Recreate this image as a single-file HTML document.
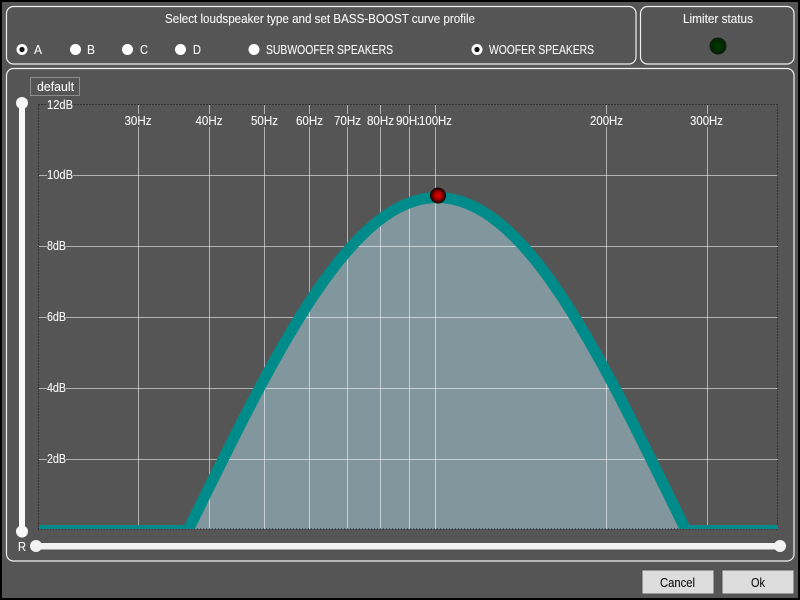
<!DOCTYPE html>
<html><head><meta charset="utf-8"><style>
html,body{margin:0;padding:0;width:800px;height:600px;overflow:hidden;background:#555}
svg{display:block}
text{font-family:"Liberation Sans",sans-serif;font-size:12.5px;fill:#f6f6f6;stroke:#f6f6f6;stroke-width:.12}
</style></head><body>
<svg width="800" height="600" viewBox="0 0 800 600" xmlns="http://www.w3.org/2000/svg">
<defs>
<radialGradient id="red" cx="50%" cy="50%" r="50%"><stop offset="0" stop-color="#e80000"/><stop offset=".45" stop-color="#b00000"/><stop offset=".85" stop-color="#300000"/><stop offset="1" stop-color="#100000"/></radialGradient>
<radialGradient id="led" cx="50%" cy="50%" r="50%"><stop offset="0" stop-color="#003c00"/><stop offset=".7" stop-color="#002800"/><stop offset="1" stop-color="#0c1c0c"/></radialGradient>
<clipPath id="plot"><rect x="39" y="105" width="739" height="424"/></clipPath>
</defs>
<rect width="800" height="600" fill="#555"/>
<rect x="1" y="1" width="798" height="598" fill="none" stroke="#000" stroke-width="2"/>

<g fill="none" stroke="#f0f0f0" stroke-width="1.2">
<rect x="6.5" y="6.5" width="629.5" height="57.5" rx="7"/>
<rect x="640.5" y="6.5" width="153.5" height="57.5" rx="7"/>
<rect x="6.5" y="68.5" width="787.5" height="492.5" rx="7"/>
</g>

<text x="165" y="23" textLength="310" lengthAdjust="spacingAndGlyphs">Select loudspeaker type and set BASS-BOOST curve profile</text>
<text x="683" y="23" textLength="70" lengthAdjust="spacingAndGlyphs">Limiter status</text>
<circle cx="718" cy="46" r="8.5" fill="url(#led)"/>

<g fill="#fff">
<circle cx="22" cy="49.5" r="5.5"/><circle cx="75.5" cy="49.5" r="5.5"/><circle cx="127.5" cy="49.5" r="5.5"/><circle cx="180.5" cy="49.5" r="5.5"/><circle cx="254" cy="49.5" r="5.5"/><circle cx="477" cy="49.5" r="5.5"/>
</g>
<circle cx="22" cy="49.5" r="2.6" fill="#111"/><circle cx="477" cy="49.5" r="2.6" fill="#111"/>
<text x="34" y="54" textLength="8" lengthAdjust="spacingAndGlyphs">A</text>
<text x="87" y="54" textLength="8" lengthAdjust="spacingAndGlyphs">B</text>
<text x="140" y="54" textLength="8" lengthAdjust="spacingAndGlyphs">C</text>
<text x="193" y="54" textLength="8" lengthAdjust="spacingAndGlyphs">D</text>
<text x="266" y="54" textLength="127" lengthAdjust="spacingAndGlyphs">SUBWOOFER SPEAKERS</text>
<text x="489" y="54" textLength="105" lengthAdjust="spacingAndGlyphs">WOOFER SPEAKERS</text>

<rect x="30.5" y="77.5" width="49" height="18" fill="#555" stroke="#8c8c8c"/>
<text x="37" y="91" textLength="37" lengthAdjust="spacingAndGlyphs">default</text>

<g clip-path="url(#plot)">
<path d="M188,530.5 C272,359 349,197.5 437,197.5 C527,197.5 602,359 686,530.5 Z" fill="#81969d"/>
</g>
<g stroke="#fff" stroke-opacity=".55" stroke-width="1" fill="none">
<path d="M138.5,105V529M209.5,105V529M264.5,105V529M309.5,105V529M347.5,105V529M380.5,105V529M409.5,105V529M435.5,105V529M606.5,105V529M707.5,105V529"/>
</g>
<g stroke="#fff" stroke-opacity=".55" stroke-width="1" fill="none">
<path d="M39,175.5H778M39,246.5H778M39,317.5H778M39,388.5H778M39,459.5H778"/>
</g>
<rect x="38.5" y="104.5" width="739" height="424.5" fill="none" stroke="#111" stroke-dasharray="1 2"/>
<g clip-path="url(#plot)">
<path d="M30,530.5 H188 C272,359 349,197.5 437,197.5 C527,197.5 602,359 686,530.5 H790" fill="none" stroke="#008b8b" stroke-width="11" stroke-linejoin="miter"/>
</g>

<g fill="#555">
<rect x="47" y="99" width="26" height="12"/><rect x="47" y="169" width="26" height="12"/><rect x="47" y="240" width="19" height="12"/><rect x="47" y="311" width="19" height="12"/><rect x="47" y="382" width="19" height="12"/><rect x="47" y="453" width="19" height="12"/>
<rect x="124" y="114" width="28" height="13"/><rect x="195" y="114" width="28" height="13"/><rect x="251" y="114" width="27" height="13"/><rect x="296" y="114" width="27" height="13"/><rect x="334" y="114" width="27" height="13"/><rect x="367" y="114" width="27" height="13"/><rect x="396" y="114" width="27" height="13"/>
</g>
<text x="47" y="109" textLength="26" lengthAdjust="spacingAndGlyphs">12dB</text>
<text x="47" y="179" textLength="26" lengthAdjust="spacingAndGlyphs">10dB</text>
<text x="47" y="250" textLength="19" lengthAdjust="spacingAndGlyphs">8dB</text>
<text x="47" y="321" textLength="19" lengthAdjust="spacingAndGlyphs">6dB</text>
<text x="47" y="392" textLength="19" lengthAdjust="spacingAndGlyphs">4dB</text>
<text x="47" y="463" textLength="19" lengthAdjust="spacingAndGlyphs">2dB</text>
<text x="124.5" y="125" textLength="27" lengthAdjust="spacingAndGlyphs">30Hz</text>
<text x="195.5" y="125" textLength="27" lengthAdjust="spacingAndGlyphs">40Hz</text>
<text x="251" y="125" textLength="27" lengthAdjust="spacingAndGlyphs">50Hz</text>
<text x="296" y="125" textLength="27" lengthAdjust="spacingAndGlyphs">60Hz</text>
<text x="334" y="125" textLength="27" lengthAdjust="spacingAndGlyphs">70Hz</text>
<text x="367" y="125" textLength="27" lengthAdjust="spacingAndGlyphs">80Hz</text>
<text x="396" y="125" textLength="27" lengthAdjust="spacingAndGlyphs">90Hz</text>
<rect x="419" y="114" width="33" height="13" fill="#555"/>
<text x="419" y="125" textLength="33" lengthAdjust="spacingAndGlyphs">100Hz</text>
<rect x="590" y="114" width="33" height="13" fill="#555"/>
<text x="590" y="125" textLength="33" lengthAdjust="spacingAndGlyphs">200Hz</text>
<rect x="690" y="114" width="33" height="13" fill="#555"/>
<text x="690" y="125" textLength="33" lengthAdjust="spacingAndGlyphs">300Hz</text>

<circle cx="438" cy="195.5" r="8" fill="url(#red)"/>

<rect x="19" y="103" width="6" height="428" fill="#f8f8f8"/>
<circle cx="22" cy="103" r="6" fill="#f8f8f8"/>
<circle cx="22" cy="531.5" r="6" fill="#f8f8f8"/>
<rect x="36" y="543" width="744" height="6.5" fill="#f2f2f2"/>
<circle cx="36" cy="546" r="6" fill="#f2f2f2"/>
<circle cx="780" cy="546" r="6" fill="#f2f2f2"/>
<text x="18" y="551" textLength="8" lengthAdjust="spacingAndGlyphs">R</text>

<rect x="642.5" y="570.5" width="71" height="23" fill="#ddd"/>
<rect x="722.5" y="570.5" width="71" height="23" fill="#ddd"/>
<text x="660" y="587" textLength="35" lengthAdjust="spacingAndGlyphs" style="fill:#111;stroke:#111">Cancel</text>
<text x="751" y="587" textLength="14" lengthAdjust="spacingAndGlyphs" style="fill:#111;stroke:#111">Ok</text>
</svg>
</body></html>
